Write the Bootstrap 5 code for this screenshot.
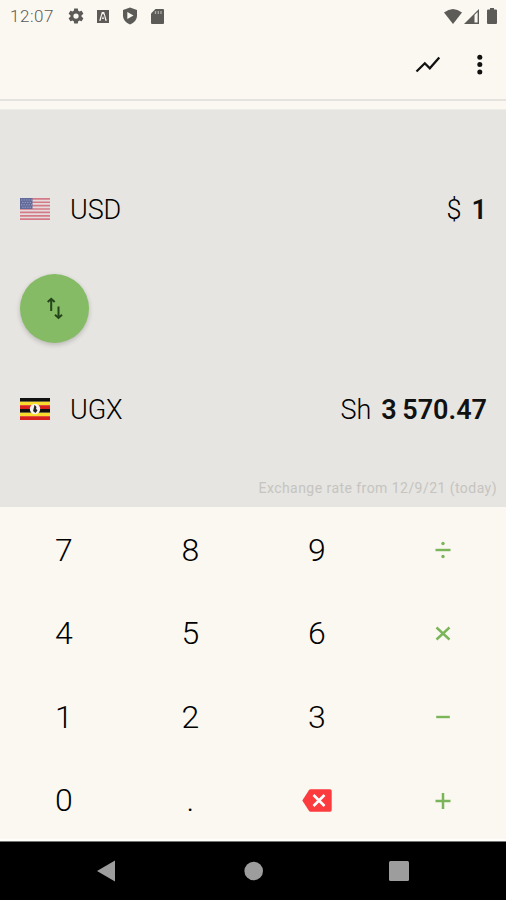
<!DOCTYPE html>
<html lang="en">
<head>
<meta charset="utf-8">
<meta name="viewport" content="width=device-width, initial-scale=1">
<title>Currency converter</title>
<link href="https://cdn.jsdelivr.net/npm/bootstrap@5.3.0/dist/css/bootstrap.min.css" rel="stylesheet">
<style>
  body { font-family: Roboto, "Liberation Sans", sans-serif; background: #fbf8f1; color: #111; overflow: hidden; }
  svg { display: block; flex: none; }
  .screen { height: 900px; }
  .status { height: 32px; padding: 0 9px 0 10px; color: #5c5b58; }
  .clock { font-size: 17px; font-weight: 300; letter-spacing: .55px; width: 57px; line-height: 32px; }
  .toolbar { height: 67px; padding: 0 14px 2px 0; }
  .toolbar .btn { color: #111; }
  .edge { height: 10px; border-top: 2px solid #e5e3de; }
  .converter { height: 398px; background: #e6e5e1; padding: 82px 19px 0 20px; border-top: 1px solid #efede8; }
  .money { height: 36px; font-size: 27px; line-height: 36px; }
  .money svg { margin-bottom: 3px; }
  .code { margin-left: 20px; font-weight: 300; letter-spacing: -.1px; color: #000; }
  .sign { font-weight: 300; margin-right: 10px; color: #000; }
  .amount { font-weight: 600; }
  .swap { width: 69px; height: 69px; margin: 46px 0 49px; background: #85bb65; color: #24451a; box-shadow: 0 2px 5px rgba(0,0,0,.2); }
  .rate { font-size: 14px; line-height: 20px; color: #c5c4c0; margin: 50px -10px 0 0; letter-spacing: .45px; }
  .keypad { height: 334px; border-bottom: 2px solid #fffefb; }
  .key { height: 83.5px; font-size: 32px; font-weight: 300; line-height: 1; color: #000; padding: 2px 0 0 1px; }
  .key svg { color: #7ab55a; }
  .sysnav { height: 59px; background: #000; color: #9d9d9d; border-top: 1px solid #777; }
</style>
</head>
<body>
<div class="screen d-flex flex-column">
  <header>
    <div class="status d-flex align-items-center">
      <span class="clock">12:07</span>
      <svg width="18" height="18" viewBox="0 0 24 24"><path fill="currentColor" fill-rule="evenodd" d="M19.4 13c.1-.7.1-1.300 0-2l2.200-1.700c.2-.2.200-.4.100-.6l-2-3.500c-.1-.2-.4-.3-.6-.2l-2.500 1a8 8 0 0 0-1.700-1L14.500 2.400c0-.3-.3-.4-.5-.4h-4c-.2 0-.5.100-.5.400L9.100 5a8 8 0 0 0-1.700 1l-2.500-1c-.2-.1-.5 0-.6.200l-2 3.500c-.1.200-.1.400.1.600L4.600 11c-.1.700-.1 1.300 0 2l-2.200 1.700c-.2.200-.2.400-.1.600l2 3.500c.1.200.4.300.6.200l2.500-1a8 8 0 0 0 1.700 1l.4 2.600c0 .3.300.4.500.4h4c.2 0 .5-.1.500-.4l.4-2.600a8 8 0 0 0 1.700-1l2.500 1c.2.100.5 0 .6-.2l2-3.500c.1-.2.1-.4-.1-.6zM12 15.500a3.500 3.500 0 1 1 0-7 3.500 3.500 0 0 1 0 7z"/></svg>
      <svg width="12" height="13" viewBox="0 0 12 13" style="margin-left:12px"><path fill="currentColor" fill-rule="evenodd" d="M0 0h12v13H0zM2.200 10.800h1.500L4.800 5.500 6 3.500l1.200 2 1.100 5.300h1.500L7.200 2H4.800zM5 9h2L6 6z"/></svg>
      <svg width="16" height="18" viewBox="0 0 16 18" style="margin-left:13px"><path fill="currentColor" d="M8 .5 15 3v5.500c0 4-3 7.500-7 9-4-1.500-7-5-7-9V3z"/><path fill="#fbf8f1" d="M5.300 5 11.500 8.500l-6.200 3.500z"/></svg>
      <svg width="13" height="15" viewBox="0 0 13 15" style="margin-left:13px"><path fill="currentColor" d="M4.500 0H12q1 0 1 1v13q0 1-1 1H1q-1 0-1-1V4.500z"/><path stroke="#aaa8a3" stroke-width="1.300" d="M4.500 2v3M7.300 2v3M10 2v3"/></svg>
      <svg class="ms-auto" width="18" height="15" viewBox="0 0 18 15"><path fill="currentColor" d="M0 3.500Q9-3.500 18 3.500L9 15z"/></svg>
      <svg width="15" height="15" viewBox="0 0 15 15" style="margin-left:2px"><path fill="currentColor" d="M15 0v15H0z"/><path fill="#fbf8f1" d="M10.500 6 13.600 3v10.500h-3.100z"/></svg>
      <svg width="10" height="16" viewBox="0 0 10 16" style="margin-left:8px"><path fill="currentColor" d="M3 0h4v1.500h2q1 0 1 1V15q0 1-1 1H1q-1 0-1-1V2.500q0-1 1-1h2z"/></svg>
    </div>
    <nav class="toolbar d-flex justify-content-end align-items-center">
      <button class="btn p-0 border-0" aria-label="Chart"><svg width="26" height="18" viewBox="0 0 26 18"><path fill="none" stroke="currentColor" stroke-width="2.300" d="m1.500 15.500 8.300-8.200 5 5L24.300 1.500"/></svg></button>
      <button class="btn p-0 border-0" aria-label="More" style="margin-left:27px"><svg width="24" height="22" viewBox="0 0 24 22"><g fill="currentColor"><circle cx="11.800" cy="3.200" r="2.500"/><circle cx="11.800" cy="10.600" r="2.500"/><circle cx="11.800" cy="18" r="2.500"/></g></svg></button>
    </nav>
    <div class="edge"></div>
  </header>

  <main>
    <section class="converter">
      <div class="money d-flex align-items-center">
        <svg width="30" height="22" viewBox="0 0 30 22"><path fill="#e4dcdc" d="M0 0h30v22H0z"/><path stroke="#d57b88" stroke-width="1.700" d="M0 .85h30M0 4.230h30M0 7.620h30M0 11h30M0 14.400h30M0 17.800h30M0 21.150h30"/><path fill="#626a9a" d="M0 0h12.500v11H0z"/><path stroke="#9da3c2" stroke-width="1" stroke-dasharray="1.300 1.200" d="M1 2h11M2.200 4.400h10M1 6.800h11M2.200 9.200h10"/></svg>
        <span class="code">USD</span>
        <span class="sign ms-auto">$</span><span class="amount">1</span>
      </div>
      <button class="swap btn rounded-circle border-0 p-0 d-flex align-items-center justify-content-center" aria-label="Swap"><svg width="18" height="24" viewBox="0 0 18 24"><g fill="none" stroke="currentColor" stroke-width="2"><path d="M5.200 14V2M1.700 5l3.500-3.200L8.700 5M12.500 9.500V21M9 17.800l3.500 3.200 3.500-3.200"/></g></svg></button>
      <div class="money d-flex align-items-center">
        <svg width="30" height="22" viewBox="0 0 30 22"><path fill="#111" d="M0 0h30v3.700H0zM0 11h30v3.700H0z"/><path fill="#fbdc2c" d="M0 3.700h30v3.600H0zM0 14.700h30v3.600H0z"/><path fill="#d8201c" d="M0 7.300h30V11H0zM0 18.300h30V22H0z"/><circle cx="15" cy="11" r="5.200" fill="#f4f2f0"/><path fill="#222" d="m14.500 6.800 2 2.200-.5 1.500 1.500 2-2 2.500-2.500-2 .7-2.500z"/></svg>
        <span class="code">UGX</span>
        <span class="sign ms-auto">Sh</span><span class="amount">3&#8201;570.47</span>
      </div>
      <div class="rate text-end">Exchange rate from 12/9/21 (today)</div>
    </section>

    <section class="keypad row row-cols-4 g-0">
      <button class="key btn border-0 col">7</button><button class="key btn border-0 col">8</button><button class="key btn border-0 col">9</button>
      <button class="key btn border-0 col d-flex align-items-center justify-content-center" aria-label="Divide"><svg width="16" height="18" viewBox="0 0 16 18"><path stroke="currentColor" stroke-width="2.400" d="M.5 9h15"/><g fill="currentColor"><circle cx="8" cy="2.500" r="1.700"/><circle cx="8" cy="15.500" r="1.700"/></g></svg></button>
      <button class="key btn border-0 col">4</button><button class="key btn border-0 col">5</button><button class="key btn border-0 col">6</button>
      <button class="key btn border-0 col d-flex align-items-center justify-content-center" aria-label="Multiply"><svg width="16" height="16" viewBox="0 0 16 16"><path stroke="currentColor" stroke-width="2.400" d="m1.500 2.500 13 12M14.500 2.500l-13 12"/></svg></button>
      <button class="key btn border-0 col">1</button><button class="key btn border-0 col">2</button><button class="key btn border-0 col">3</button>
      <button class="key btn border-0 col d-flex align-items-center justify-content-center" aria-label="Subtract"><svg width="16" height="16" viewBox="0 0 16 16"><path stroke="currentColor" stroke-width="2.400" d="M1.200 8h13.600"/></svg></button>
      <button class="key btn border-0 col">0</button><button class="key btn border-0 col">.</button>
      <button class="key btn border-0 col d-flex align-items-center justify-content-center" aria-label="Delete"><svg width="30" height="23" viewBox="0 0 30 23"><path fill="#fb3b3d" d="M8.500.3H28q1.700 0 1.700 1.700v19q0 1.700-1.700 1.700H8.500q-1 0-1.600-.9L.3 11.500 6.900 1.200Q7.500.3 8.500.3z"/><path stroke="#fff" stroke-width="2.600" d="m11.500 6 11 11M22.500 6l-11 11"/></svg></button>
      <button class="key btn border-0 col d-flex align-items-center justify-content-center" aria-label="Add"><svg width="16" height="17" viewBox="0 0 16 17"><path stroke="currentColor" stroke-width="2.500" d="M.5 9h15M8 1v16"/></svg></button>
    </section>
  </main>

  <footer class="sysnav row g-0 align-items-center">
    <div class="col-12 d-flex justify-content-between align-items-center" style="padding:0 97px 0 97px">
      <svg width="18" height="22" viewBox="0 0 18 22"><path fill="currentColor" d="M18 .5v21L0 11z"/></svg>
      <svg width="20" height="20" viewBox="0 0 20 20" style="margin-left:3px"><circle cx="9.700" cy="10" r="9.300" fill="currentColor"/></svg>
      <svg width="20" height="20" viewBox="0 0 20 20"><rect width="20" height="20" rx="1.500" fill="currentColor"/></svg>
    </div>
  </footer>
</div>
<script src="https://cdn.jsdelivr.net/npm/bootstrap@5.3.0/dist/js/bootstrap.bundle.min.js"></script>
</body>
</html>
